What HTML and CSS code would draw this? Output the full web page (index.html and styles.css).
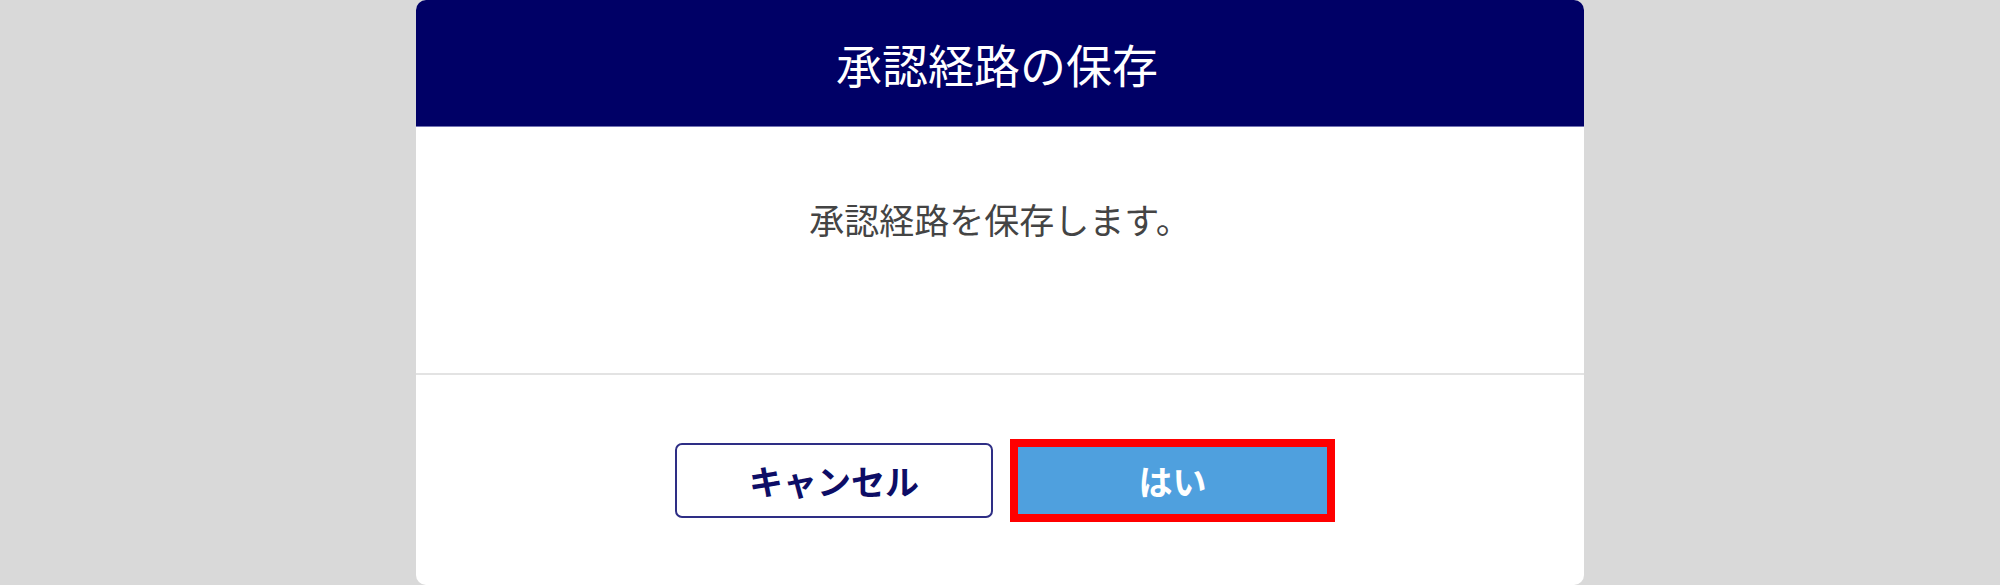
FILE: index.html
```html
<!DOCTYPE html>
<html lang="ja">
<head>
<meta charset="utf-8">
<title>承認経路の保存</title>
<link rel="stylesheet" href="styles.css">
</head>
<body>
<div class="page">
  <div class="dialog">
    <div class="dialog-header">
      <h1 class="dialog-title">承認経路の保存</h1>
    </div>
    <div class="dialog-body">
      <p class="dialog-message">承認経路を保存します。</p>
    </div>
    <div class="dialog-footer">
      <button class="btn btn-cancel" type="button">キャンセル</button>
      <div class="highlight">
        <button class="btn btn-ok" type="button">はい</button>
      </div>
    </div>
  </div>
</div>
</body>
</html>
```

FILE: styles.css
```css
html, body {
  margin: 0;
  padding: 0;
  height: 100%;
}
body {
  background: #d9d9d9;
  font-family: "Noto Sans CJK JP", "Noto Sans", sans-serif;
  overflow: hidden;
}
.page {
  display: flex;
  justify-content: center;
  height: 585px;
}
.dialog {
  width: 1168px;
  height: 585px;
  background: #ffffff;
  border-radius: 10px;
  overflow: hidden;
  display: flex;
  flex-direction: column;
}
.dialog-header {
  height: 126px;
  background: #000066;
  border-bottom: 1px solid #7373b3;
  display: flex;
  align-items: center;
  justify-content: center;
}
.dialog-title {
  margin: 0;
  color: #ffffff;
  font-size: 46px;
  font-weight: 400;
  line-height: 1;
  transform: translateX(-3px);
}
.dialog-body {
  height: 248px;
  padding-top: 68px;
  box-sizing: border-box;
  border-bottom: 2px solid #e3e3e3;
}
.dialog-message {
  margin: 0;
  text-align: center;
  color: #444444;
  font-size: 35px;
  line-height: 48px;
}
.dialog-footer {
  display: flex;
  justify-content: center;
  align-items: center;
  gap: 17px;
  padding-top: 64px;
  padding-left: 10px;
}
.btn {
  font-family: "Noto Sans CJK JP", "Noto Sans", sans-serif;
  font-size: 34px;
  font-weight: 700;
  line-height: 1;
  cursor: pointer;
  margin: 0;
}
.btn-cancel {
  width: 318px;
  height: 75px;
  background: #ffffff;
  color: #0d0d66;
  border: 2px solid #2e2e85;
  border-radius: 7px;
}
.highlight {
  border: 8px solid #ff0000;
  width: 309px;
  height: 67px;
}
.btn-ok {
  width: 100%;
  height: 100%;
  background: #4fa0de;
  color: #ffffff;
  border: none;
  border-radius: 0;
}
```
